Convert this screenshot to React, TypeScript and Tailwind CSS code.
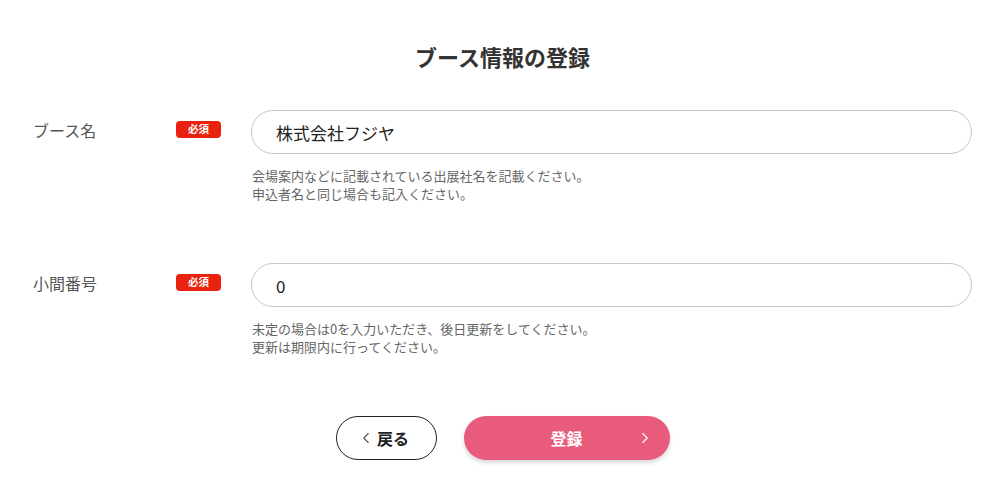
import { ChevronLeft, ChevronRight } from 'lucide-react'

const font = { fontFamily: '"Noto Sans CJK JP", "Noto Sans", sans-serif' }

function Field({ label, value, help }: { label: string; value: string; help: string[] }) {
  return (
    <div className="flex items-start">
      <div className="flex h-[44px] w-[143px] shrink-0 items-center pb-[5px] text-[16px] text-[#555]">{label}</div>
      <div className="flex h-[44px] w-[75px] shrink-0 items-center pb-[6px]">
        <span className="flex h-[17px] w-[45px] items-center justify-center rounded-[4px] bg-[#e8220e] text-[10.5px] font-bold leading-none text-white">
          必須
        </span>
      </div>
      <div className="min-w-0 flex-1">
        <input
          readOnly
          value={value}
          className="h-[44px] w-full rounded-full border border-[#c8c8c8] bg-white px-[24px] text-[17px] text-[#222] outline-none"
          style={font}
        />
        <div className="mt-[13px] pl-[1px] text-[13px] leading-[18px] text-[#666]">
          {help.map((h) => (
            <p key={h}>{h}</p>
          ))}
        </div>
      </div>
    </div>
  )
}

export default function App() {
  return (
    <div className="min-h-[490px] bg-white pl-[33px] pr-[28px] pt-[40px]" style={font}>
      <h1 className="text-center text-[22px] font-bold leading-[32px] text-[#333]">ブース情報の登録</h1>

      <div className="mt-[38px] flex flex-col gap-[60px]">
        <Field
          label="ブース名"
          value="株式会社フジヤ"
          help={['会場案内などに記載されている出展社名を記載ください。', '申込者名と同じ場合も記入ください。']}
        />
        <Field
          label="小間番号"
          value="0"
          help={['未定の場合は0を入力いただき、後日更新をしてください。', '更新は期限内に行ってください。']}
        />
      </div>

      <div className="mt-[60px] flex justify-center gap-[27px]">
        <button className="flex h-[44px] w-[101px] items-center justify-center gap-[2px] rounded-full border-[1.5px] border-[#222] bg-white pr-[6px] text-[16px] font-bold text-[#222]">
          <ChevronLeft size={18} strokeWidth={1.5} className="text-[#555]" />
          戻る
        </button>
        <button className="relative flex h-[44px] w-[206px] items-center justify-center rounded-full bg-[#e95b7c] text-[16px] font-bold text-white shadow-[0_3px_4px_rgba(0,0,0,0.15)]">
          登録
          <ChevronRight size={18} strokeWidth={1.5} className="absolute right-[16px]" />
        </button>
      </div>
    </div>
  )
}
